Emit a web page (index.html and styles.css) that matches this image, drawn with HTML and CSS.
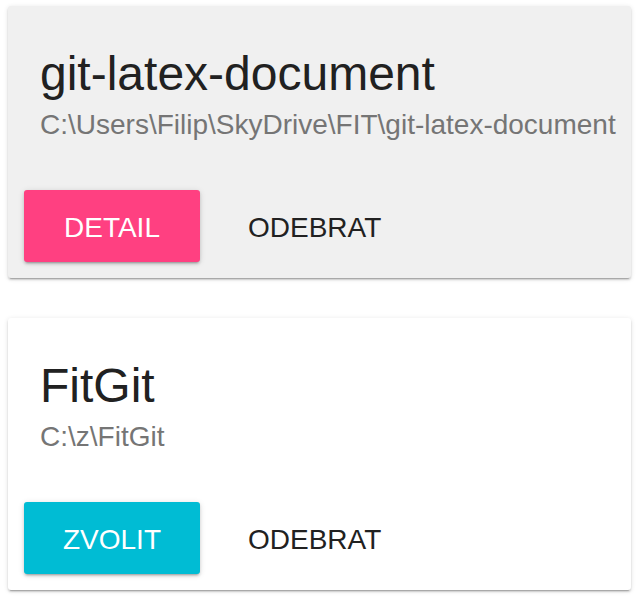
FILE: index.html
```html
<!DOCTYPE html>
<html lang="cs">
<head>
<meta charset="utf-8">
<title>Repozitáře</title>
<link rel="stylesheet" href="styles.css">
</head>
<body>
<div class="list">
  <div class="card card--active">
    <div class="card__head">
      <h2 class="card__title">git-latex-document</h2>
      <div class="card__path">C:\Users\Filip\SkyDrive\FIT\git-latex-document</div>
    </div>
    <div class="card__actions">
      <button class="btn btn--raised btn--accent">DETAIL</button>
      <button class="btn btn--flat">ODEBRAT</button>
    </div>
  </div>
  <div class="card">
    <div class="card__head">
      <h2 class="card__title">FitGit</h2>
      <div class="card__path">C:\z\FitGit</div>
    </div>
    <div class="card__actions">
      <button class="btn btn--raised btn--primary">ZVOLIT</button>
      <button class="btn btn--flat">ODEBRAT</button>
    </div>
  </div>
</div>
</body>
</html>
```
FILE: styles.css
```css
html, body {
  margin: 0;
  padding: 0;
  background: #ffffff;
}
body {
  font-family: "Liberation Sans", Arial, sans-serif;
  padding: 6px 8px;
}
.list {
  display: flex;
  flex-direction: column;
  gap: 40px;
}
.card {
  background: #ffffff;
  border-radius: 3px;
  box-shadow: 0 2px 2px 0 rgba(0,0,0,.14), 0 3px 1px -2px rgba(0,0,0,.2), 0 1px 5px 0 rgba(0,0,0,.12);
  padding: 40px 0 16px;
  height: 272px;
  box-sizing: border-box;
}
.card--active {
  background: #f0f0f0;
}
.card__head {
  padding: 0 32px;
}
.card__title {
  margin: 0;
  font-weight: 400;
  font-size: 48px;
  line-height: 56px;
  color: #212121;
}
.card__path {
  margin-top: 7px;
  font-size: 28px;
  line-height: 32px;
  color: #757575;
  white-space: nowrap;
}
.card__actions {
  margin-top: 49px;
  padding: 0 16px;
  display: flex;
  gap: 16px;
}
.btn {
  font-family: "Liberation Sans", Arial, sans-serif;
  font-size: 28px;
  height: 72px;
  line-height: 69px;
  padding: 3px 32px 0;
  box-sizing: border-box;
  border: none;
  border-radius: 3px;
  background: transparent;
  color: #212121;
  cursor: pointer;
}
.btn--raised {
  min-width: 176px;
  color: #ffffff;
  box-shadow: 0 2px 3px 0 rgba(0,0,0,.14), 0 3px 2px -2px rgba(0,0,0,.2), 0 1px 6px 0 rgba(0,0,0,.12);
}
.btn--accent {
  background: #ff4081;
}
.btn--primary {
  background: #00bcd4;
}
```
